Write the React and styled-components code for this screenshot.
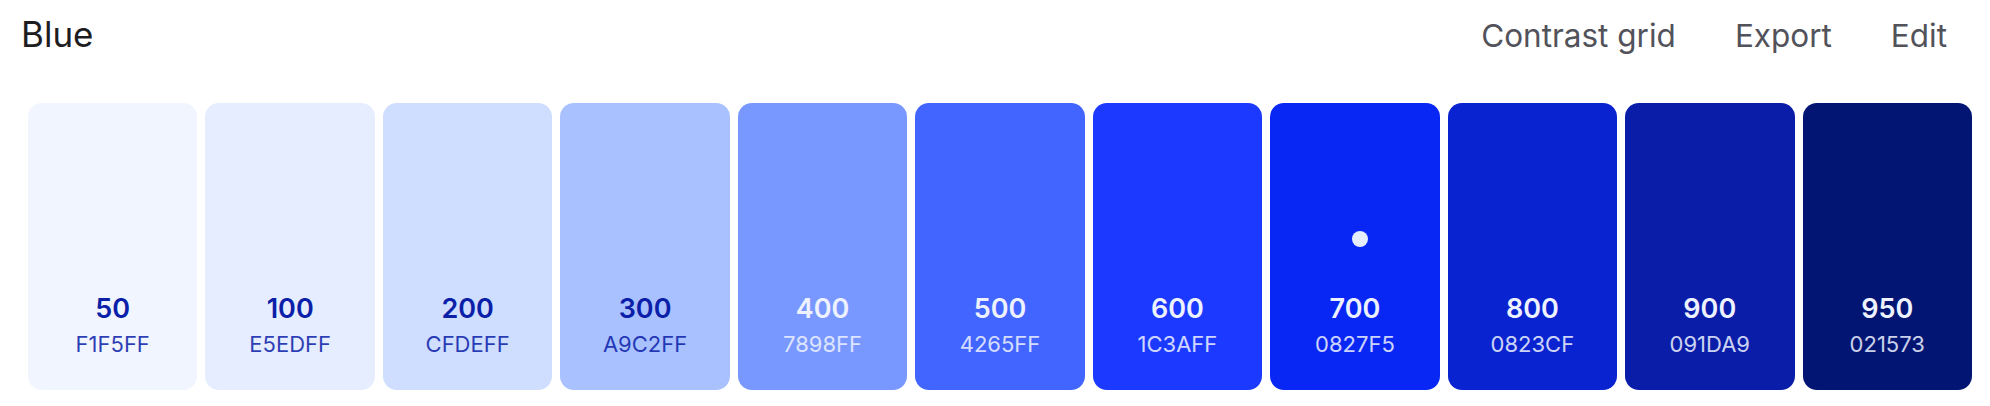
import React from 'react';
import styled, { createGlobalStyle } from 'styled-components';

const GlobalStyle = createGlobalStyle`
	html, body {
		margin: 0;
		padding: 0;
		background: #fff;
		font-family: Inter, 'Noto Sans', 'Liberation Sans', sans-serif;
	}
`;

const Page = styled.div`
	width: 1990px;
	height: 406px;
	box-sizing: border-box;
	padding-top: 17px;
`;

const Toolbar = styled.div`
	display: flex;
	align-items: baseline;
	justify-content: space-between;
	padding: 0 43px 0 21px;
`;

const Title = styled.h2`
	margin: 0;
	font-size: 35px;
	font-weight: 400;
	line-height: 1;
	color: #1d1d1f;
`;

const Actions = styled.div`
	display: flex;
	align-items: baseline;
	gap: 59px;
`;

const ActionButton = styled.button`
	background: transparent;
	border: 0;
	padding: 0;
	margin: 0;
	font-family: inherit;
	font-size: 31.5px;
	line-height: 1;
	color: #52525b;
	cursor: pointer;
`;

const SwatchRow = styled.ul`
	list-style: none;
	display: grid;
	grid-template-columns: repeat(11, 1fr);
	gap: 8px;
	margin: 51px 18px 0 28px;
	padding: 0;
`;

const Swatch = styled.li`
	height: 287px;
	box-sizing: border-box;
	border-radius: 14px;
	background: ${p => p.$bg};
	color: ${p => (p.$light ? '#0c1fa9' : '#eef2ff')};
	display: flex;
	flex-direction: column;
	align-items: center;
	justify-content: flex-end;
	padding-bottom: 35px;
`;

const Marker = styled.span`
	width: 16px;
	height: 16px;
	border-radius: 50%;
	background: #e5edff;
	margin: 0 0 48px 10px;
`;

const ShadeName = styled.div`
	font-size: 27px;
	font-weight: 600;
	line-height: 1;
`;

const HexCode = styled.div`
	margin-top: 11px;
	font-size: 22px;
	font-weight: 400;
	line-height: 1;
	opacity: 0.85;
`;

const shades = [
	{ name: '50', hex: 'F1F5FF' },
	{ name: '100', hex: 'E5EDFF' },
	{ name: '200', hex: 'CFDEFF' },
	{ name: '300', hex: 'A9C2FF' },
	{ name: '400', hex: '7898FF' },
	{ name: '500', hex: '4265FF' },
	{ name: '600', hex: '1C3AFF' },
	{ name: '700', hex: '0827F5', base: true },
	{ name: '800', hex: '0823CF' },
	{ name: '900', hex: '091DA9' },
	{ name: '950', hex: '021573' },
];

const App = () => (
	<Page>
		<GlobalStyle />
		<Toolbar>
			<Title>Blue</Title>
			<Actions>
				<ActionButton>Contrast grid</ActionButton>
				<ActionButton>Export</ActionButton>
				<ActionButton>Edit</ActionButton>
			</Actions>
		</Toolbar>
		<SwatchRow>
			{shades.map((s, i) => (
				<Swatch key={s.name} $bg={`#${s.hex}`} $light={i < 4}>
					{s.base && <Marker />}
					<ShadeName>{s.name}</ShadeName>
					<HexCode>{s.hex}</HexCode>
				</Swatch>
			))}
		</SwatchRow>
	</Page>
);

export default App;
